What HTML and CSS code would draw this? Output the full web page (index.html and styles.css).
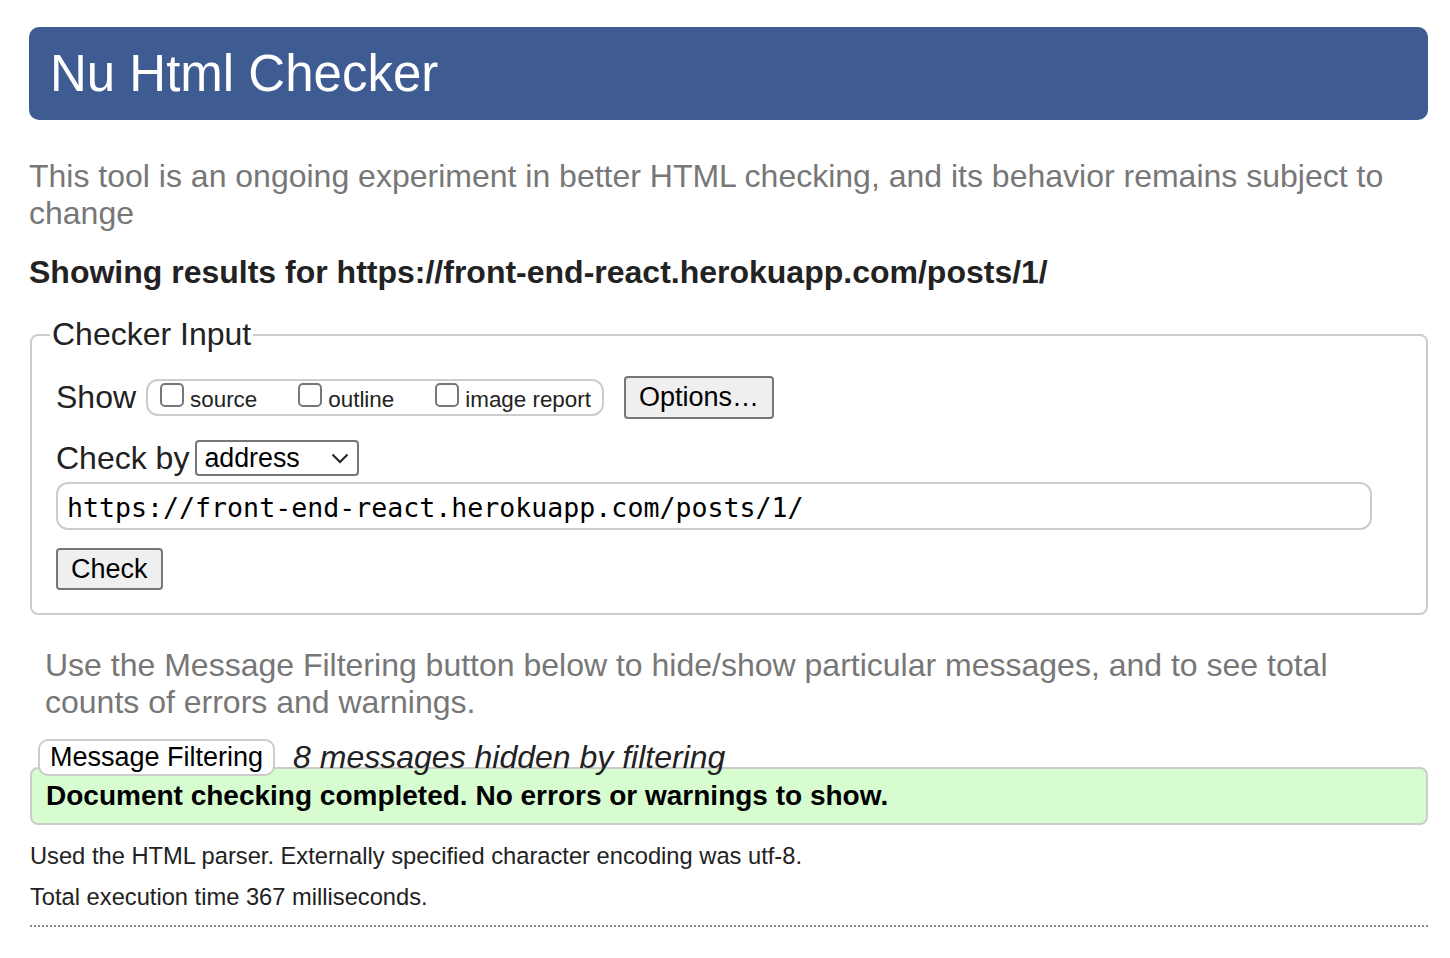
FILE: index.html
```html
<!DOCTYPE html>
<html lang="en">
<head>
<meta charset="utf-8">
<title>Nu Html Checker</title>
<link rel="stylesheet" href="styles.css">
</head>
<body>
<header class="masthead"><h1>Nu Html Checker</h1></header>
<p class="intro">This tool is an ongoing experiment in better HTML checking, and its behavior remains subject to change</p>
<p class="showing">Showing results for https://front-end-react.herokuapp.com/posts/1/</p>
<form class="form">
  <fieldset class="checker">
    <legend>Checker Input</legend>
    <div class="row row-show">
      <span class="lbl">Show</span>
      <div class="opts">
        <span class="opt"><span class="cb"></span>source</span>
        <span class="opt"><span class="cb"></span>outline</span>
        <span class="opt"><span class="cb"></span>image report</span>
      </div>
      <button type="button" class="btn btn-options">Options…</button>
    </div>
    <div class="row row-by">
      <span class="lbl">Check by</span>
      <div class="select"><span>address</span><svg class="chev" width="18" height="11" viewBox="0 0 18 11"><path d="M1.5 1.5 L9 9 L16.5 1.5" fill="none" stroke="#222" stroke-width="2"/></svg></div>
    </div>
    <div class="url">https://front-end-react.herokuapp.com/posts/1/</div>
    <div class="row row-check"><button type="button" class="btn btn-check">Check</button></div>
  </fieldset>
</form>
<p class="filter-note">Use the Message Filtering button below to hide/show particular messages, and to see total counts of errors and warnings.</p>
<div class="filter-row">
  <button type="button" class="tab">Message Filtering</button>
  <span class="hidden-note">8 messages hidden by filtering</span>
</div>
<div class="success">Document checking completed. No errors or warnings to show.</div>
<p class="meta meta-first">Used the HTML parser. Externally specified character encoding was utf-8.</p>
<p class="meta meta-second">Total execution time 367 milliseconds.</p>
<div class="dotted"></div>
</body>
</html>
```
FILE: styles.css
```css
* { box-sizing: border-box; }
html, body { background: #fff; }
body {
  margin: 0;
  padding: 27px 22px 40px 29px;
  font-family: "Liberation Sans", Arial, Helvetica, sans-serif;
  font-size: 32px;
  color: #222;
}
.masthead {
  background: #3e5c92;
  border-radius: 10px;
  height: 93px;
  display: flex;
  align-items: center;
  padding-left: 21px;
}
.masthead h1 {
  margin: 0;
  font-size: 51px;
  font-weight: 400;
  color: #fff;
  line-height: 1;
}
.intro {
  margin: 38px 0 0;
  color: #777;
  line-height: 37px;
}
.showing {
  margin: 22px 0 0;
  font-weight: 700;
  line-height: 37px;
}
.form { margin: 25px 0 0 1px; }
.checker {
  margin: 0;
  border: 2px solid #ccc;
  border-radius: 8px;
  padding: 0 54px 23px 24px;
  min-width: 0;
}
.checker legend {
  margin-left: -6px;
  padding: 0 2px;
  line-height: 37px;
  font-size: 32px;
}
.row { display: flex; align-items: center; }
.row-show { height: 43px; margin-top: 23px; }
.lbl { font-size: 32px; line-height: 37px; white-space: nowrap; }
.opts {
  display: flex;
  align-items: center;
  height: 37px;
  margin-left: 10px;
  border: 2px solid #ccc;
  border-radius: 12px;
  padding: 0 11px 0 12px;
  gap: 41px;
  font-size: 22.4px;
  color: #222;
}
.opt { display: block; white-space: nowrap; }
.cb {
  display: inline-block;
  vertical-align: baseline;
  width: 24px;
  height: 24px;
  border: 2px solid #777;
  border-radius: 5px;
  margin-right: 6px;
  background: #fff;
}
.btn {
  font-family: inherit;
  font-size: 27px;
  color: #000;
  background: #efefef;
  border: 2px solid #767676;
  border-radius: 4px;
  padding: 0 13px;
  cursor: default;
}
.btn-options { height: 43px; margin-left: 20px; padding: 0 13px; }
.row-by { margin-top: 21px; height: 36px; }
.select {
  display: flex;
  align-items: center;
  justify-content: space-between;
  width: 164px;
  height: 36px;
  margin-left: 6px;
  border: 2px solid #767676;
  border-radius: 4px;
  padding: 0 8px 0 7px;
  font-size: 26.8px;
  color: #000;
  background: #fff;
}
.chev { display: block; }
.url {
  margin-top: 6px;
  height: 48px;
  border: 2px solid #ccc;
  border-radius: 12px;
  padding: 2px 9px 0;
  display: flex;
  align-items: center;
  font-family: "DejaVu Sans Mono", "Liberation Mono", monospace;
  font-size: 26.6px;
  color: #000;
}
.row-check { margin-top: 18px; }
.btn-check { height: 42px; }
.filter-note {
  margin: 32px 0 0;
  padding: 0 16px;
  color: #777;
  line-height: 37px;
}
.filter-row {
  display: flex;
  align-items: center;
  margin: 18px 0 -9px 9px;
  position: relative;
  z-index: 1;
}
.tab {
  height: 37px;
  padding: 0 10px;
  background: #fff;
  border: 2px solid #ccc;
  border-radius: 10px;
  font-family: inherit;
  font-size: 27px;
  color: #000;
}
.hidden-note {
  margin-left: 18px;
  font-style: italic;
  font-size: 32px;
  line-height: 37px;
}
.success {
  margin-left: 1px;
  border: 2px solid #ccc;
  border-radius: 8px;
  background: #d7fcd0;
  height: 58px;
  display: flex;
  align-items: center;
  padding-left: 14px;
  font-weight: 700;
  font-size: 28px;
  color: #000;
}
.meta {
  margin: 0 0 0 1px;
  font-size: 23.7px;
  line-height: 27px;
}
.meta-first { margin-top: 18px; }
.meta-second { margin-top: 14px; }
.dotted {
  margin: 14px 0 0 1px;
  border-top: 2px dotted #888;
}
```
